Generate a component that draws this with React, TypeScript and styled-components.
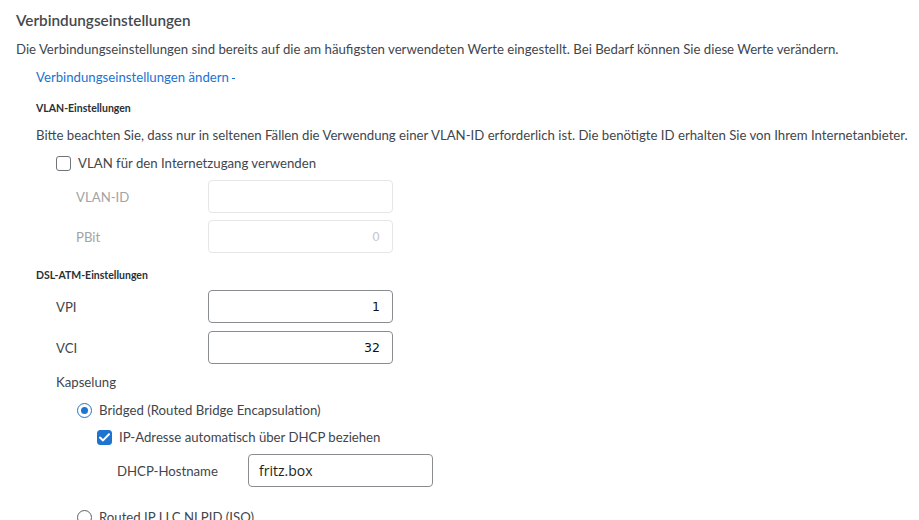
import React from 'react';
import styled, { createGlobalStyle } from 'styled-components';

const GlobalStyle = createGlobalStyle`
  html, body {
    margin: 0;
    padding: 0;
    background: #fff;
  }

  body {
    font-family: Lato, 'Open Sans', sans-serif;
    color: #3f464c;
  }
`;

const Page = styled.main`
  width: 919px;
  height: 520px;
  overflow: hidden;
  box-sizing: border-box;
  padding: 10px 16px 0;
`;

const Title = styled.h2`
  margin: 0 0 10px;
  font-size: 15.3px;
  font-weight: 600;
  line-height: 20px;
  color: #44494e;
`;

const Text = styled.p<{ $mb?: number }>`
  margin: 0 0 ${(p) => p.$mb ?? 0}px;
  font-size: 13.2px;
  line-height: 18px;
  white-space: nowrap;
`;

const Indent = styled.div<{ $left: number }>`
  padding-left: ${(p) => p.$left}px;
`;

const Link = styled.a`
  display: inline-flex;
  align-items: center;
  gap: 3px;
  margin-bottom: 15px;
  font-size: 13.2px;
  line-height: 18px;
  color: #1a73cf;
  text-decoration: none;
  cursor: pointer;

  .tick {
    width: 3px;
    height: 1px;
    margin-top: 2px;
    background: #1a73cf;
  }
`;

const SubHeading = styled.h3<{ $mb: number }>`
  margin: 0 0 ${(p) => p.$mb}px;
  font-size: 10.5px;
  font-weight: 700;
  line-height: 14px;
  color: #2b2f33;
`;

const Option = styled.label<{ $mb: number; $disabled?: boolean }>`
  display: flex;
  align-items: center;
  gap: 7px;
  margin-bottom: ${(p) => p.$mb}px;
  font-size: 13.2px;
  line-height: 18px;
  white-space: nowrap;
  color: ${(p) => (p.$disabled ? '#a3a3a3' : '#3f464c')};
`;

const Box = styled.span<{ $checked?: boolean }>`
  display: grid;
  place-items: center;
  box-sizing: border-box;
  width: 15px;
  height: 15px;
  border-radius: 3px;
  border: 1px solid ${(p) => (p.$checked ? '#1f74d1' : '#707479')};
  background: ${(p) => (p.$checked ? '#1f74d1' : '#fff')};
`;

const Radio = styled.span<{ $checked?: boolean }>`
  display: grid;
  place-items: center;
  box-sizing: border-box;
  width: 15px;
  height: 15px;
  border-radius: 50%;
  border: ${(p) => (p.$checked ? '1.5px solid #1f74d1' : '1px solid #5c6166')};

  &::after {
    content: '';
    display: ${(p) => (p.$checked ? 'block' : 'none')};
    width: 7px;
    height: 7px;
    border-radius: 50%;
    background: #1f74d1;
  }
`;

const Row = styled.div<{ $label: number; $mb: number }>`
  display: grid;
  grid-template-columns: ${(p) => p.$label}px 185px;
  align-items: center;
  margin-bottom: ${(p) => p.$mb}px;
`;

const RowLabel = styled.span<{ $disabled?: boolean }>`
  font-size: 13.2px;
  color: ${(p) => (p.$disabled ? '#a3a3a3' : '#3f464c')};
`;

const Input = styled.input<{ $align?: 'left' | 'right' }>`
  box-sizing: border-box;
  width: 185px;
  height: 33px;
  padding: 0 12px 0 11px;
  border: 1px solid #8a8d90;
  border-radius: 4px;
  background: #fff;
  font-family: 'DejaVu Sans', Tahoma, sans-serif;
  font-size: 12.5px;
  color: #111;
  text-align: ${(p) => p.$align ?? 'right'};
  outline: none;

  &:disabled {
    border-color: #e6e6e6;
    color: #c8c8c8;
    background: #fff;
  }
`;

const HostInput = styled(Input)`
  font-family: 'Open Sans', sans-serif;
  font-size: 14px;
  padding-left: 10px;
  color: #1d1f21;
`;

function Check() {
  return (
    <svg width="11" height="9" viewBox="0 0 11 9" fill="none">
      <path d="M1 4.6 L4 7.4 L10 1.2" stroke="#fff" strokeWidth="2" strokeLinecap="round" strokeLinejoin="round" />
    </svg>
  );
}

export default function App(): JSX.Element {
  return (
    <>
      <GlobalStyle />
      <Page>
        <Title>Verbindungseinstellungen</Title>
        <Text $mb={8}>
          Die Verbindungseinstellungen sind bereits auf die am häufigsten verwendeten Werte eingestellt. Bei Bedarf
          können Sie diese Werte verändern.
        </Text>

        <Indent $left={20}>
          <Link>
            Verbindungseinstellungen ändern
            <span className="tick" />
          </Link>

          <SubHeading $mb={11}>VLAN-Einstellungen</SubHeading>
          <Text $mb={10}>
            Bitte beachten Sie, dass nur in seltenen Fällen die Verwendung einer VLAN-ID erforderlich ist. Die
            benötigte ID erhalten Sie von Ihrem Internetanbieter.
          </Text>

          <Indent $left={20}>
            <Option $mb={8}>
              <Box />
              VLAN für den Internetzugang verwenden
            </Option>
            <Indent $left={20}>
              <Row $label={132} $mb={7}>
                <RowLabel $disabled>VLAN-ID</RowLabel>
                <Input disabled defaultValue="" />
              </Row>
              <Row $label={132} $mb={15}>
                <RowLabel $disabled>PBit</RowLabel>
                <Input disabled defaultValue="0" />
              </Row>
            </Indent>
          </Indent>

          <SubHeading $mb={8}>DSL-ATM-Einstellungen</SubHeading>

          <Indent $left={20}>
            <Row $label={152} $mb={8}>
              <RowLabel>VPI</RowLabel>
              <Input defaultValue="1" />
            </Row>
            <Row $label={152} $mb={9}>
              <RowLabel>VCI</RowLabel>
              <Input defaultValue="32" />
            </Row>
            <Text $mb={10}>Kapselung</Text>

            <Indent $left={21}>
              <Option $mb={9}>
                <Radio $checked />
                Bridged (Routed Bridge Encapsulation)
              </Option>
              <Indent $left={20}>
                <Option $mb={8}>
                  <Box $checked>
                    <Check />
                  </Box>
                  IP-Adresse automatisch über DHCP beziehen
                </Option>
                <Indent $left={20}>
                  <Row $label={131} $mb={21}>
                    <RowLabel>DHCP-Hostname</RowLabel>
                    <HostInput $align="left" defaultValue="fritz.box" />
                  </Row>
                </Indent>
              </Indent>
              <Option $mb={9}>
                <Radio />
                Routed IP LLC NLPID (ISO)
              </Option>
            </Indent>
          </Indent>
        </Indent>
      </Page>
    </>
  );
}
